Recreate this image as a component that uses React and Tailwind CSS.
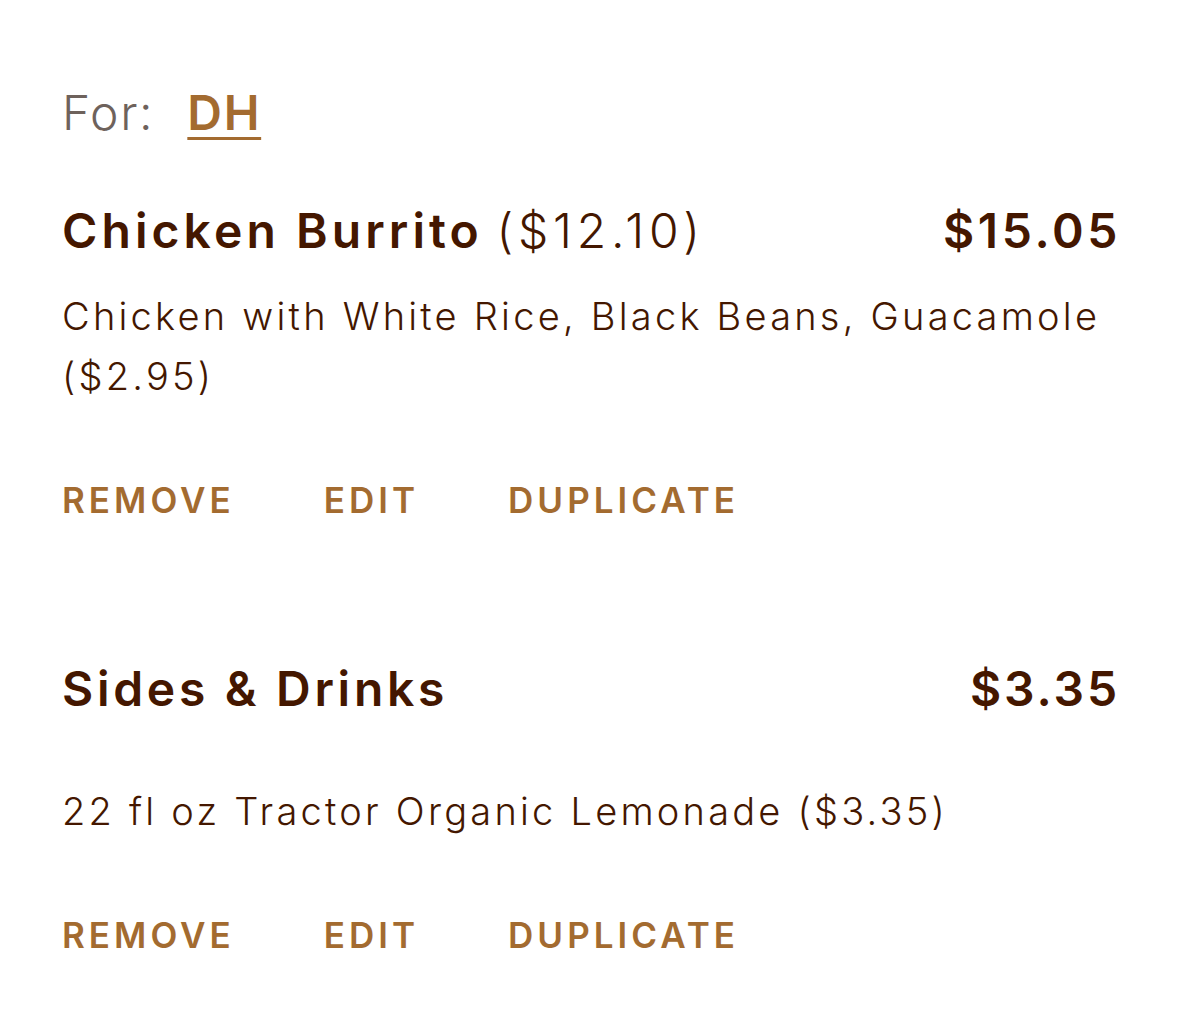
import React from "react";

const font = { fontFamily: "Inter, 'Noto Sans', sans-serif" };

function Actions({ className }) {
  return (
    <div className={`flex gap-[89px] text-[35px] leading-[60px] font-semibold text-[#a36b30] tracking-[0.115em] ${className}`}>
      <button className="tracking-[0.115em]">REMOVE</button>
      <button className="tracking-[0.115em]">EDIT</button>
      <button className="tracking-[0.115em]">DUPLICATE</button>
    </div>
  );
}

export default function App() {
  return (
    <div className="min-h-screen bg-white px-[62px] pt-[83px] text-[#441700]" style={font}>
      <div className="text-[48px] leading-[60px] text-[#6e625c] font-light tracking-[0.035em]">
        For:
        <a href="#" className="ml-[33px] font-semibold text-[#a36b30] underline underline-offset-[7px] decoration-[3px]">
          DH
        </a>
      </div>

      <div className="mt-[58px] flex justify-between items-center text-[48px] leading-[60px]">
        <div>
          <span className="font-semibold tracking-[0.085em]">Chicken Burrito</span>{" "}
          <span className="font-light tracking-[0.1em]">($12.10)</span>
        </div>
        <span className="-mr-[4px] font-semibold tracking-[0.075em]">$15.05</span>
      </div>
      <p className="mt-[25px] text-[38px] leading-[60px] font-light tracking-[0.085em]">
        Chicken with White Rice, Black Beans, Guacamole ($2.95)
      </p>
      <Actions className="mt-[64px]" />

      <div className="mt-[129px] flex justify-between items-center text-[48px] leading-[60px] font-semibold">
        <span className="tracking-[0.077em]">Sides &amp; Drinks</span>
        <span className="-mr-[3px] tracking-[0.06em]">$3.35</span>
      </div>
      <p className="mt-[62px] text-[38px] leading-[60px] font-light tracking-[0.085em]">
        22 fl oz Tractor Organic Lemonade ($3.35)
      </p>
      <Actions className="mt-[64px]" />
    </div>
  );
}
